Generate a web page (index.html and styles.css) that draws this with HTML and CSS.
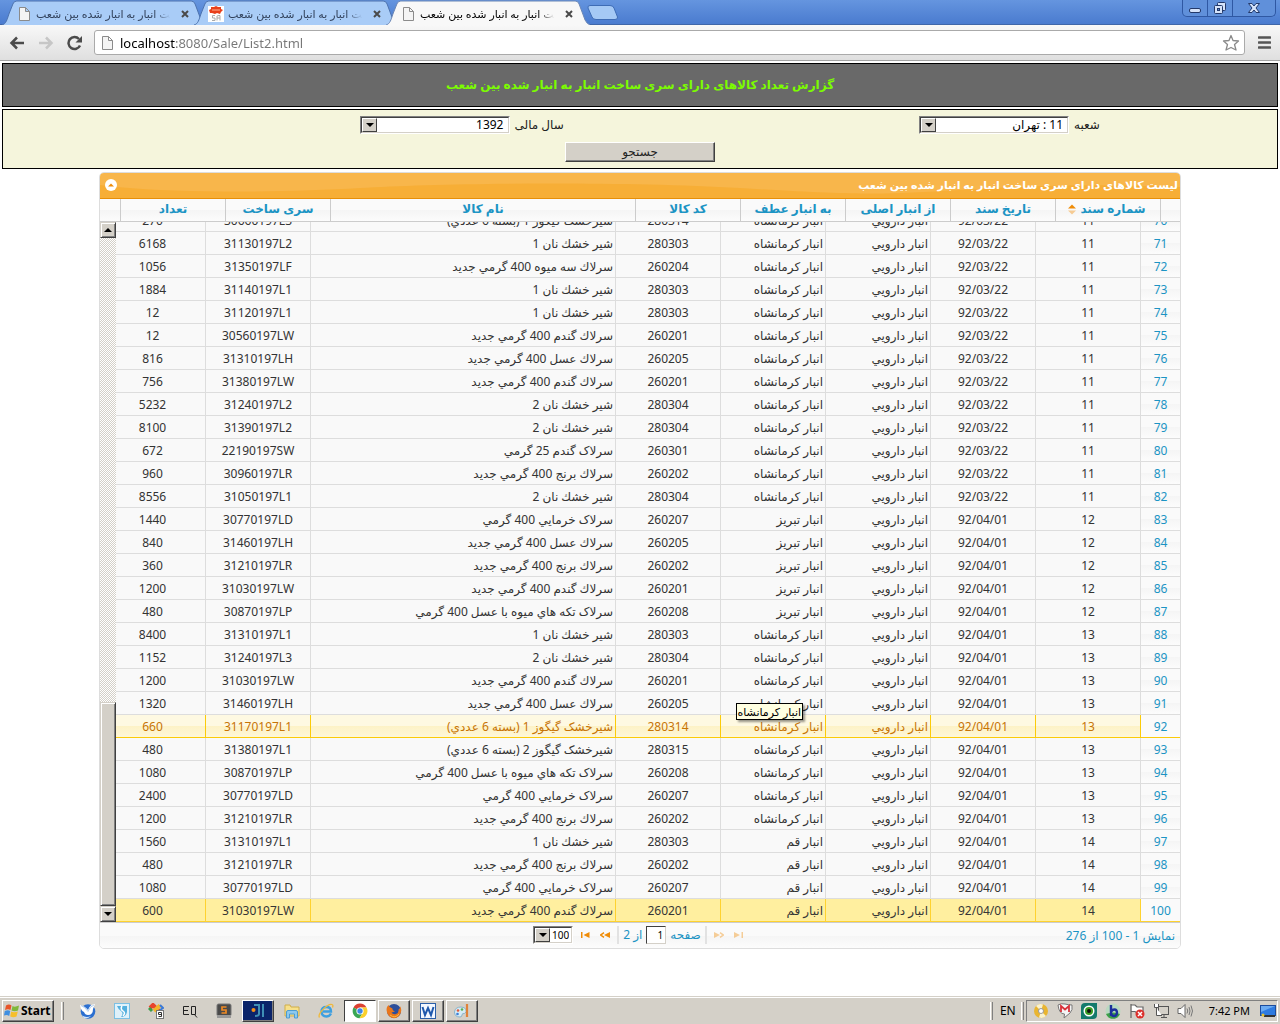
FILE: index.html
```html
<!DOCTYPE html>
<html lang="fa">
<head>
<meta charset="utf-8">
<title>گزارش تعداد کالاهای دارای سری ساخت انبار به انبار شده بین شعب</title>
<link rel="stylesheet" href="styles.css">
</head>
<body>
<header class="browser">
  <div class="tabstrip">
    <div class="tab">
      <svg class="tab-shape" viewBox="0 0 206 25" preserveAspectRatio="none"><path d="M0 25C4 24 5 20 7 14L11 4Q12 1 15 1H191Q194 1 195 4L201 20Q203 24 206 25"/></svg>
      <svg class="favicon" viewBox="0 0 16 16"><path class="page-icon" d="M3.500 1.500H9.500L13.500 5.500V14.500H3.500ZM9.500 1.500V5.500H13.500"/></svg>
      <span class="tab-title"><span dir="rtl">خت انبار به انبار شده بین شعب</span></span>
      <button class="tab-close" aria-label="Close tab"><svg viewBox="0 0 8 8"><path d="M1 1L7 7M7 1L1 7"/></svg></button>
    </div>
    <div class="tab">
      <svg class="tab-shape" viewBox="0 0 206 25" preserveAspectRatio="none"><path d="M0 25C4 24 5 20 7 14L11 4Q12 1 15 1H191Q194 1 195 4L201 20Q203 24 206 25"/></svg>
      <svg class="favicon" viewBox="0 0 16 16"><rect width="16" height="16" fill="#fff"/><path d="M1 4L3 3L3 1L6 1L8 0L10 1L13 1L13 3L15 4L13 6L12 8L9 7L7 8L4 7L2 7Z" fill="#e8401c"/><path d="M4 4H12" stroke="#ffb090"/><path d="M7 9.500H4.500V12H7V14.500H4M9 14.500V10Q9 9.500 12 9.500V14.500M9 12H12" stroke="#aaa" fill="none"/></svg>
      <span class="tab-title"><span dir="rtl">خت انبار به انبار شده بین شعب</span></span>
      <button class="tab-close" aria-label="Close tab"><svg viewBox="0 0 8 8"><path d="M1 1L7 7M7 1L1 7"/></svg></button>
    </div>
    <div class="tab tab-active">
      <svg class="tab-shape" viewBox="0 0 206 25" preserveAspectRatio="none"><path d="M0 25C4 24 5 20 7 14L11 4Q12 1 15 1H191Q194 1 195 4L201 20Q203 24 206 25"/></svg>
      <svg class="favicon" viewBox="0 0 16 16"><path class="page-icon" d="M3.500 1.500H9.500L13.500 5.500V14.500H3.500ZM9.500 1.500V5.500H13.500"/></svg>
      <span class="tab-title"><span dir="rtl">خت انبار به انبار شده بین شعب</span></span>
      <button class="tab-close" aria-label="Close tab"><svg viewBox="0 0 8 8"><path d="M1 1L7 7M7 1L1 7"/></svg></button>
    </div>
    <button class="new-tab" aria-label="New tab"><svg viewBox="0 0 32 16"><path d="M3 .5H23Q26 .5 27 3L30.500 12Q31 14.500 28 14.500H9Q6 14.500 5 12L1 3Q.5 .5 3 .5Z" fill="#a5c9f5" stroke="#3e6cb5"/></svg></button>
    <div class="window-buttons">
      <button aria-label="Minimize"><svg viewBox="0 0 12 12" width="12" height="12"><rect x=".5" y="6.500" width="11" height="4" rx="1.500"/></svg></button>
      <button aria-label="Restore"><svg viewBox="0 0 14 14" width="14" height="14"><rect x="4.500" y="1.500" width="8" height="8" rx="1"/><rect x="1.500" y="4.500" width="8" height="8" rx="1"/><rect x="4.500" y="7.500" width="2" height="2" fill="#5b8cd8"/></svg></button>
      <button class="wide" aria-label="Close"><svg viewBox="0 0 12 12" width="12" height="12"><path d="M.5 1.500H4L6 4L8 1.500H11.500L8 6L11.500 10.500H8L6 8L4 10.500H.5L4 6Z"/></svg></button>
    </div>
  </div>
  <div class="toolbar">
    <button class="nav" aria-label="Back"><svg viewBox="0 0 16 14"><path d="M15 7H3M8 1.500L2.500 7L8 12.500" stroke="#4b4b4b" stroke-width="2.500" fill="none"/></svg></button>
    <button class="nav" aria-label="Forward"><svg viewBox="0 0 16 14"><path d="M1 7H13M8 1.500L13.500 7L8 12.500" stroke="#c6c6c6" stroke-width="2.500" fill="none"/></svg></button>
    <button class="nav" aria-label="Reload"><svg viewBox="0 0 16 16"><path d="M13 10.500A6 6 0 1 1 12 4" stroke="#4b4b4b" stroke-width="2.500" fill="none"/><path d="M15 1V7.500H8.500Z" fill="#4b4b4b"/></svg></button>
    <div class="omnibox">
      <svg class="favicon" viewBox="0 0 16 16"><path class="page-icon" d="M3.500 1.500H9.500L13.500 5.500V14.500H3.500ZM9.500 1.500V5.500H13.500"/></svg>
      <input class="address" aria-label="Address" value="localhost:8080/Sale/List2.html">
      <svg class="star" viewBox="0 0 18 18"><path d="M9 1.500L11 6.500L16.500 7L12.500 10.500L14 16L9 13.500L4 16L5.500 10.500L1.500 7L7 6.500Z" fill="#fff" stroke="#8a8a8a" stroke-width="1.300" stroke-linejoin="round"/></svg>
    </div>
    <button class="menu" aria-label="Menu"><svg viewBox="0 0 13 13"><path d="M1 1.500H12M1 6.500H12M1 11.500H12" stroke="#555" stroke-width="2.600" stroke-linecap="round"/></svg></button>
  </div>
</header>

<main class="page" dir="rtl">
  <h1 class="report-title">گزارش تعداد کالاهای دارای سری ساخت انبار به انبار شده بین شعب</h1>
  <form class="filters">
    <div class="field">
      <label for="branch">شعبه</label>
      <span class="combo"><select id="branch"><option>11 : تهران</option></select><span class="combo-arrow"></span></span>
    </div>
    <div class="field">
      <label for="year">سال مالی</label>
      <span class="combo"><select id="year"><option>1392</option></select><span class="combo-arrow"></span></span>
    </div>
    <button type="button" class="search">جستجو</button>
  </form>

  <section class="grid">
    <div class="grid-caption">
      <h2>لیست کالاهای دارای سری ساخت انبار به انبار شده بین شعب</h2>
      <svg class="caption-wave" viewBox="0 0 1080 25" preserveAspectRatio="none"><path d="M0 12C60 20 180 20 260 15S520 8 640 15S780 22 860 17S1000 11 1080 14V25H0Z"/></svg>
      <button class="collapse" aria-label="بستن"><svg viewBox="0 0 12 12"><circle cx="6" cy="6" r="6" fill="#fff"/><path d="M3 7.500L6 4.500L9 7.500Z" fill="#ef8c08"/></svg></button>
    </div>
    <div class="head-clip">
      <table class="head">
        <colgroup><col class="c-rn-head"><col class="c"><col class="c"><col class="c"><col class="c"><col class="c"><col class="c-name"><col class="c"><col class="c"><col class="c-rn-head"></colgroup>
        <tr><th></th><th class="sorted">شماره سند<svg class="sort" viewBox="0 0 8 12"><path d="M0 4.500L4 .5L8 4.500Z" fill="#ef8c08"/><path d="M0 6.500L4 10.500L8 6.500Z" fill="#f6cb93"/></svg></th><th>تاریخ سند</th><th>از انبار اصلی</th><th>به انبار عطف</th><th>کد کالا</th><th>نام کالا</th><th>سری ساخت</th><th>تعداد</th><th></th></tr>
      </table>
    </div>
    <div class="grid-body">
      <div class="rows-clip">
        <table class="rows">
          <colgroup><col class="c-rn"><col class="c"><col class="c"><col class="c"><col class="c"><col class="c"><col class="c-name"><col class="c"><col class="c"></colgroup>
          <tbody id="rows"></tbody>
        </table>
      </div>
      <div class="scrollbar">
        <span class="scroll-btn"><i class="tri-up"></i></span>
        <span class="scroll-track"></span>
        <span class="scroll-thumb"></span>
        <span class="scroll-btn"><i class="tri-down"></i></span>
      </div>
      <div class="tooltip">انبار کرمانشاه</div>
    </div>
    <div class="pager">
      <div class="pager-info">نمایش 1 - 100 از 276</div>
      <div class="pager-nav">
        <button class="pg off" aria-label="اول"><svg viewBox="0 0 10 6"><path d="M0 0L6 3L0 6ZM7.500 0H9V6H7.500Z"/></svg></button>
        <button class="pg off" aria-label="قبلی"><svg viewBox="0 0 10 6"><path d="M0 0L6 3L0 6Z"/><path class="chev" d="M6 .7L9.500 3L6 5.300"/></svg></button>
        <span class="pg-sep"></span>
        <label for="pageno">صفحه</label>
        <input id="pageno" class="page-input" value="1">
        <span>از 2</span>
        <span class="pg-sep"></span>
        <button class="pg" aria-label="بعدی"><svg viewBox="0 0 10 6"><path d="M10 0L4 3L10 6Z"/><path class="chev" d="M4 .7L.5 3L4 5.300"/></svg></button>
        <button class="pg" aria-label="آخر"><svg viewBox="0 0 10 6"><path d="M9.500 0L3.500 3L9.500 6ZM1 0H2.500V6H1Z"/></svg></button>
        <span class="combo combo-small"><select aria-label="تعداد در صفحه"><option>100</option></select><span class="combo-arrow"></span></span>
      </div>
      <div></div>
    </div>
  </section>
</main>

<footer class="taskbar">
  <button class="start"><svg viewBox="0 0 16 16"><path d="M2 2.500Q5 .5 7.500 2.500L6.500 7Q4 5.500 1 7Z" fill="#e8552a"/><path d="M8.500 3Q11 4.500 15 2.500L14 7.500Q10.500 9 7.500 7.500Z" fill="#7fb83a"/><path d="M.8 8Q4 6.500 6.200 8L5.200 13Q3 11.500 0 12.500Z" fill="#3f8fe0"/><path d="M7.200 8.500Q10 10 13.800 8.500L12.500 13.500Q9.500 15 6.200 13.500Z" fill="#f6bf2c"/></svg>Start</button>
  <span class="divider"></span>
  <nav class="launch">
    <button aria-label="Thunderbird"><svg viewBox="0 0 16 16"><circle cx="8" cy="8.500" r="7.300" fill="#2b6fd0"/><path d="M0 2Q5 3 8 7Q10 1 15 1L13 6Q13 12 8 12Q5 12 4 9Q1 8 0 2Z" fill="#fff"/><path d="M1 2.500Q5 4 8 8.500Q10 3 14 2" stroke="#9cc3ee" stroke-width=".8" fill="none"/><path d="M2 12.500Q6 15 11 13Q8 16 4 15Z" fill="#cfe4fa"/></svg></button>
    <button aria-label="Maxthon"><svg viewBox="0 0 16 16"><rect x=".5" y=".5" width="15" height="15" fill="#dff1fa" stroke="#7cc0e4"/><path d="M3 3H13V9Q12 14 7 14Q10 10 7 8Q4 6 3 3Z" fill="#55b0de"/><path d="M8 3Q6 6 9 8T9 13" stroke="#fff" stroke-width="1.500" fill="none"/></svg></button>
    <button aria-label="Calendar"><svg viewBox="0 0 16 16"><path d="M2 5L5 2L13 10" stroke="#e8442c" stroke-width="4" fill="none"/><path d="M6 8L12 2.500" stroke="#f2b52c" stroke-width="4"/><path d="M1 5L4 8" stroke="#3c9c4a" stroke-width="3"/><path d="M12 2L15 5L12 7" stroke="#3a79d8" stroke-width="2" fill="none"/><rect x="8.500" y="7.500" width="7" height="8" fill="#fff" stroke="#777"/><path d="M10.500 13.500H13.500V9.500H10.500V11.500H13.500" stroke="#333" fill="none"/></svg></button>
    <button aria-label="EditPlus"><svg viewBox="0 0 16 16"><path d="M7 3.500H1.500V11.500H7M1.500 7.500H6M9.500 3.500H13.500V11.500H9.500ZM12 11L15 14.500" stroke="#222" fill="none"/></svg></button>
    <button aria-label="Sublime Text"><svg viewBox="0 0 16 16"><rect x="1" y="1" width="14" height="12" rx="1.500" fill="#4a4a4a" stroke="#777"/><rect x="1" y="12" width="14" height="3" fill="#999"/><path d="M10.500 4H6V7H10V10H5.500" stroke="#f08a24" stroke-width="1.700" fill="none"/></svg></button>
    <button class="raised dark" aria-label="IntelliJ IDEA"><svg viewBox="0 0 16 16"><circle cx="3.500" cy="7" r="2" fill="#f39019"/><path d="M4 2H9V11Q9 13 5 13M13 1V14" stroke="#3f8fb5" stroke-width="2" fill="none"/></svg></button>
    <button aria-label="Explorer"><svg viewBox="0 0 16 16"><path d="M1 2H6L7 4H15V13H1Z" fill="#f7e08a" stroke="#d0ae4a"/><path d="M2.500 15V9Q2.500 7.500 4 7.500H12Q13.500 7.500 13.500 9V15H10.500V11H5.500V15Z" fill="#8cc9ee" stroke="#4d9bd0"/></svg></button>
    <button aria-label="Internet Explorer"><svg viewBox="0 0 16 16"><path d="M13 10.500Q11.500 13.500 8.500 13.500Q3.500 13.500 3.500 8.500Q3.500 4 8.500 4Q13 4 13 8.500H5" stroke="#3c9fe0" stroke-width="2.400" fill="none"/><path d="M1.500 14.500C-1 11 10 0 14 1.500Q15.500 2 14.500 4.500" stroke="#f0b93a" stroke-width="1.300" fill="none"/></svg></button>
    <button class="pressed" aria-label="Chrome"><svg viewBox="0 0 16 16"><path d="M8 8L1.500 4.500A7.300 7.300 0 0 1 14.500 4.500H8Z" fill="#dc4132"/><path d="M8 8L1.500 4.500A7.300 7.300 0 0 0 7.500 15.300L11 9.500Z" fill="#3aa654"/><path d="M8 4.500H14.500A7.300 7.300 0 0 1 7.500 15.300L11 9.500Z" fill="#fbd02e"/><circle cx="8" cy="8" r="3.600" fill="#fff"/><circle cx="8" cy="8" r="2.700" fill="#3f86e8"/></svg></button>
    <button class="raised" aria-label="Firefox"><svg viewBox="0 0 16 16"><circle cx="8" cy="8" r="7" fill="#2d4f9b"/><path d="M1 4Q-.5 9 3 13Q8 17.500 13 13Q17 8 14 3Q14.500 6 12.500 6.500Q13 10 10 11Q7 12 5.500 9.500L9 8.500Q6 7.500 6.500 5.500Q3 4 2.500 2Z" fill="#e9761c"/><path d="M4 12Q9 16 13 11" stroke="#fbb93a" fill="none"/></svg></button>
    <button class="raised" aria-label="Word"><svg viewBox="0 0 16 16"><rect x=".5" y=".5" width="15" height="15" fill="#f3f8ff" stroke="#2b5fa8"/><path d="M2.500 4L5 12L8 5L11 12L13.500 4" stroke="#1f59ad" stroke-width="2" fill="none"/></svg></button>
    <button class="raised" aria-label="Paint"><svg viewBox="0 0 16 16"><path d="M7 4Q1 4 .5 9Q.5 14 6 14Q8 14 8 12T10.500 10.500Q13 9 12 6.500Q10.500 4 7 4Z" fill="#d6ebf5" stroke="#8bb3c8"/><circle cx="4" cy="7.500" r="1.300" fill="#e05a3c"/><circle cx="8" cy="6.500" r="1.300" fill="#58b050"/><circle cx="3.500" cy="11" r="1.300" fill="#3c80d8"/><path d="M13 1V6M13 6V14" stroke="#e0823a" stroke-width="2.200"/></svg></button>
  </nav>
  <span class="spacer"></span>
  <span class="divider"></span>
  <span class="lang">EN</span>
  <span class="divider tight"></span>
  <div class="tray">
    <svg viewBox="0 0 16 16"><circle cx="8" cy="8" r="7" fill="#e9b530"/><path d="M8 8L3 3A7 7 0 0 1 10 1.500ZM8 8L13 13A7 7 0 0 1 6 14.500Z" fill="#f9f2cf"/><circle cx="8" cy="8" r="2.500" fill="#fff" stroke="#999"/></svg>
    <svg viewBox="0 0 16 16"><path d="M1 2Q4 0 8 1T15 2Q16 7 13 10L7 15L7.500 11Q2 11 1 2Z" fill="#f4f4f4" stroke="#777"/><path d="M4 9V3L8 6.500L12 3V9" stroke="#d9303a" stroke-width="1.800" fill="none"/></svg>
    <svg viewBox="0 0 16 16"><path d="M0 4Q0 0 4 0H16V12Q16 16 12 16H0Z" fill="#147a6c"/><circle cx="8" cy="8" r="5.500" fill="#fff"/><circle cx="8" cy="8" r="4" fill="#3b9d24"/><circle cx="8" cy="8" r="2" fill="#111"/></svg>
    <svg viewBox="0 0 16 16"><circle cx="8" cy="8" r="7.500" fill="#b9d9c0"/><path d="M1 11A7.500 7.500 0 0 0 15 11Q8 8 1 11Z" fill="#3da048"/><path d="M6 2V13M6 9Q7 6.500 9.500 6.500T12 10Q11.500 13 9 13T6 10" stroke="#1b2f9c" stroke-width="2.400" fill="none"/></svg>
    <svg viewBox="0 0 16 16"><path d="M2 1V15M2.500 2H6L8 4H14V10H8L6 8.500H2.500" stroke="#666" fill="#fff" stroke-width="1.200"/><circle cx="11" cy="11" r="4.500" fill="#dc2f2b"/><path d="M9 9L13 13M13 9L9 13" stroke="#fff" stroke-width="1.500"/></svg>
    <svg viewBox="0 0 16 16"><rect x="5.500" y="3.500" width="10" height="8" fill="#d4d0c8" stroke="#555"/><path d="M8 14.500H14M11 12V14" stroke="#555"/><path d="M1.500 1V4.500H5.500V1M3.500 5V12.500H9" stroke="#555" fill="#fff"/></svg>
    <svg viewBox="0 0 16 16"><path d="M1 5.500H4L8 1.500V14.500L4 10.500H1Z" fill="#fff" stroke="#666"/><path d="M10 5.500Q11.500 8 10 10.500M12 4Q14 8 12 12M14 2.500Q17 8 14 13.500" stroke="#777" fill="none"/></svg>
    <span class="clock">7:42 PM</span>
    <svg viewBox="0 0 16 16"><rect x=".5" y="2.500" width="15" height="10" fill="#2f7be0" stroke="#1d4c9c"/><path d="M1 3H15L1 9Z" fill="#6cabf2"/><path d="M4 12H15V14H4Z" fill="#333"/><circle cx="3" cy="12" r="1.500" fill="#e8c22f"/></svg>
  </div>
</footer>
<script src="app.js"></script>
</body>
</html>
```
FILE: styles.css
```css
* { box-sizing: border-box; }

body {
  margin: 0;
  min-height: 100vh;
  display: flex;
  flex-direction: column;
  background: #fff;
  font-family: "Noto Sans", "DejaVu Sans", sans-serif;
  font-size: 12px;
  line-height: 16px;
  color: #222;
}

button, input, select { font: inherit; color: inherit; margin: 0; padding: 0; border: 0; background: none; border-radius: 0; }
svg { display: block; }

/* browser frame */
.tabstrip {
  display: flex;
  height: 25px;
  padding-left: 2px;
  background: linear-gradient(#6595df, #4a7bcf);
  border-bottom: 1px solid #3f66a8;
}
.tab {
  position: relative;
  display: flex;
  align-items: center;
  width: 204px;
  height: 25px;
  padding: 2px 13px 0 14px;
  margin-right: -12px;
  font-size: 11px;
  color: #32425c;
}
.tab-shape { position: absolute; left: 0; top: 0; width: 100%; height: 25px; fill: #a9ccf7; stroke: #4d72ad; }
.tab-active { z-index: 1; color: #000; }
.tab-active .tab-shape { fill: #f8f8f8; stroke: #6a86b5; }
.favicon { position: relative; flex: none; width: 16px; height: 16px; }
.page-icon { fill: #f4f4f4; stroke: #8b8b8b; }
.tab-title {
  position: relative;
  flex: 1;
  margin: 0 4px;
  overflow: hidden;
  white-space: nowrap;
  mask-image: linear-gradient(to right, #000 86%, transparent 98%);
}
.tab-close { position: relative; width: 16px; height: 16px; padding: 4px; }
.tab-close path { stroke: #4a4a4a; stroke-width: 2; }
.new-tab { width: 32px; height: 16px; margin: 5px 0 0 9px; }
.window-buttons {
  display: flex;
  height: 17px;
  margin: 0 4px 0 auto;
  border: 1px solid #2f58a3;
  border-top: 0;
  border-radius: 0 0 5px 5px;
  background: #6090da;
}
.window-buttons button { width: 25px; display: flex; justify-content: center; align-items: center; border-right: 1px solid #2f58a3; }
.window-buttons .wide { width: 42px; border-right: 0; }
.window-buttons svg { fill: #d5e3fa; stroke: #23396a; }

.toolbar {
  display: flex;
  align-items: center;
  height: 36px;
  padding: 0 9px 0 8px;
  background: linear-gradient(#f8f8f8, #dfdfdf);
  border-bottom: 1px solid #a3a3a3;
}
.nav { width: 29px; height: 24px; padding-left: 1px; }
.nav svg { width: 16px; height: 16px; }
.omnibox {
  flex: 1;
  display: flex;
  align-items: center;
  height: 25px;
  padding: 0 4px;
  margin-left: -1px;
  background: #fff;
  border: 1px solid #aaa;
  border-radius: 3px;
}
.address {
  flex: 1;
  height: 22px;
  margin-left: 5px;
  font-size: 13px;
  background-image: linear-gradient(to right, #000 55px, #777 55px);
  background-clip: text;
  -webkit-background-clip: text;
  color: transparent;
}
.star { width: 18px; height: 18px; }
.menu { margin-left: 13px; }
.menu svg { width: 13px; height: 13px; }

/* report page */
.page { flex: 1; padding: 2px; }
.report-title {
  margin: 0;
  height: 44px;
  display: flex;
  align-items: center;
  justify-content: center;
  background: #696969;
  border: 1px solid #000;
  color: #7cfc00;
  font-size: 12px;
}
.filters {
  display: grid;
  grid-template-columns: 42fr 44fr 14fr;
  row-gap: 8px;
  margin-top: 2px;
  padding: 6px 0;
  background: #f5f5dc;
  border: 1px solid #000;
}
.field { display: flex; justify-content: center; align-items: center; gap: 5px; }
.search {
  grid-column: 1 / -1;
  justify-self: center;
  width: 150px;
  height: 20px;
  background: #d4d0c8;
  border: 1px solid;
  border-color: #fff #404040 #404040 #fff;
  box-shadow: inset -1px -1px #808080;
}

.combo { position: relative; display: inline-block; height: 18px; width: 150px; border: 1px solid; border-color: #808080 #fff #fff #808080; }
.combo select {
  display: block;
  appearance: none;
  width: 100%;
  height: 16px;
  padding: 0 4px 0 18px;
  line-height: 14px;
  background: #fff;
  color: #000;
  border: 1px solid;
  border-color: #404040 #d4d0c8 #d4d0c8 #404040;
}
.combo-arrow {
  position: absolute;
  left: 1px;
  top: 1px;
  width: 15px;
  height: 14px;
  pointer-events: none;
  background: #d4d0c8;
  border: 1px solid;
  border-color: #fff #404040 #404040 #fff;
}
.combo-arrow::after {
  content: "";
  position: absolute;
  left: 3px;
  top: 4px;
  border: 4px solid transparent;
  border-top-color: #000;
  border-bottom: 0;
}

/* data grid */
.grid {
  width: 100%;
  max-width: 1082px;
  margin: 3px auto 0;
  border: 1px solid #ddd;
  border-radius: 5px;
  overflow: hidden;
}
.grid-caption {
  position: relative;
  display: flex;
  align-items: center;
  justify-content: space-between;
  height: 26px;
  padding: 0 2px 2px 5px;
  background: #f8b64b;
  border-bottom: 1px solid #e78f08;
}
.caption-wave { position: absolute; left: 0; top: 0; width: 100%; height: 100%; fill: #f7ae36; }
.grid-caption h2 { position: relative; z-index: 1; margin: 0; font-size: 11px; color: #fff; }
.collapse { position: relative; width: 12px; height: 12px; }

.head-clip { overflow: hidden; border-bottom: 1px solid #ccc; }
table { border-collapse: separate; border-spacing: 0; table-layout: fixed; width: 1080px; }
.c { width: 105px; }
.c-name { width: 305px; }
.c-rn { width: 40px; }
.c-rn-head { width: 20px; }
.head { background: linear-gradient(#fafafa 50%, #f5f5f5 50%, #fcfcfc); }
.head th { height: 22px; padding: 0 0 2px; color: #1c94c4; font-size: 12px; line-height: 18px; border-left: 1px solid #ccc; white-space: nowrap; }
.head th:last-child { border-left: 0; }
.head .sorted { padding-right: 10px; }
.sort { display: inline-block; width: 8px; height: 12px; margin: 0 4px 0 8px; vertical-align: middle; }
.head .sorted { text-align: center; }

.grid-body { position: relative; display: flex; height: 700px; }
.rows-clip { flex: 1; min-width: 0; overflow: hidden; display: flex; flex-direction: column; justify-content: flex-end; }
.rows { flex: none; background: #f9f9f9; }
.rows td {
  height: 23px;
  padding: 2px 2px 0;
  border-bottom: 1px solid #ddd;
  border-left: 1px solid #ddd;
  text-align: center;
  white-space: nowrap;
  overflow: hidden;
  color: #333;
}
.rows td:last-child { border-left: 0; }
.rows .text { text-align: right; }
.rows td:first-child { color: #1c94c4; background: linear-gradient(#fafafa 50%, #f5f5f5 50%, #fcfcfc); }
.rows .hover td { color: #c77405; border-color: #fbcb09; background: linear-gradient(#fef9e2 50%, #fdf2c6 50%, #fef7d8); }
.rows .selected td { color: #363636; border-color: #fed22f; background: #ffef9f; }
.rows .hover td:first-child, .rows .selected td:first-child { color: #1c94c4; background: #fafafa; }

.scrollbar {
  flex: none;
  width: 16px;
  display: flex;
  flex-direction: column;
  background: repeating-conic-gradient(#d4d0c8 0 25%, #fff 0 50%) 0 0 / 2px 2px;
}
.scroll-btn, .scroll-thumb {
  background: #d4d0c8;
  border: 1px solid;
  border-color: #d4d0c8 #404040 #404040 #d4d0c8;
  box-shadow: inset 1px 1px #fff, inset -1px -1px #808080;
}
.scroll-btn { display: flex; align-items: center; justify-content: center; height: 16px; }
.scroll-track { flex: 465; }
.scroll-thumb { flex: 203; }
.tri-up, .tri-down { border: 4px solid transparent; }
.tri-up { border-top: 0; border-bottom-color: #000; }
.tri-down { border-bottom: 0; border-top-color: #000; }

.tooltip {
  position: absolute;
  right: 377px;
  bottom: 202px;
  height: 17px;
  padding: 0 1px;
  font-size: 11px;
  line-height: 15px;
  color: #000;
  background: #ffffe1;
  border: 1px solid #000;
  box-shadow: 2px 2px 2px rgba(0, 0, 0, .4);
}

.pager {
  display: grid;
  grid-template-columns: 1fr auto 1fr;
  align-items: center;
  height: 26px;
  padding: 0 5px;
  border-top: 1px solid #ccc;
  background: linear-gradient(#fafafa 50%, #f5f5f5 50%, #fcfcfc);
  color: #1c94c4;
}
.pager-nav { display: flex; align-items: center; gap: 4px; padding-bottom: 2px; }
.pg { width: 16px; height: 16px; display: flex; align-items: center; justify-content: center; }
.pg svg { width: 10px; height: 6px; fill: #ef8c08; }
.pg .chev { fill: none; stroke: #ef8c08; stroke-width: 1.5; }
.pg.off { opacity: .4; }
.pg-sep { width: 2px; height: 18px; background: #e2e2e2; }
.page-input { width: 20px; height: 18px; padding: 0 2px; font-size: 10px; color: #000; background: #fff; border: 1px solid; border-color: #404040 #d4d0c8 #d4d0c8 #404040; }
.combo-small { width: 40px; }
.combo-small select { font-size: 10px; padding: 0 2px 0 16px; }

/* taskbar */
.taskbar {
  display: flex;
  align-items: center;
  height: 28px;
  padding: 2px;
  background: #d4d0c8;
  border-top: 1px solid #d4d0c8;
  box-shadow: inset 0 1px #fff;
  color: #000;
}
.start {
  display: flex;
  align-items: center;
  gap: 1px;
  width: 52px;
  height: 22px;
  padding: 0 1px;
  font-weight: bold;
  border: 1px solid;
  border-color: #fff #404040 #404040 #fff;
  box-shadow: inset -1px -1px #808080;
}
.start svg { width: 16px; height: 16px; flex: none; }
.divider { width: 3px; height: 18px; margin: 0 7px; background: #d4d0c8; border: solid; border-width: 0 1px; border-color: #fff #808080 #fff #fff; }
.divider.tight { margin: 0 2px 0 5px; }
.launch { display: flex; gap: 2px; margin-left: 1px; }
.launch button { width: 32px; height: 22px; display: flex; align-items: center; justify-content: center; }
.launch svg, .tray svg { width: 16px; height: 16px; flex: none; }
.launch .raised { border: 1px solid; border-color: #fff #404040 #404040 #fff; box-shadow: inset -1px -1px #808080; }
.launch .dark { background: #0a246a; }
.launch .pressed { background: #fff; border: 1px solid; border-color: #404040 #fff #fff #404040; }
.spacer { flex: 1; }
.tray { display: flex; align-items: center; gap: 8px; height: 22px; padding: 0 1px 0 6px; border: 1px solid; border-color: #808080 #fff #fff #808080; }
.clock { margin: 0 2px 0 8px; font-size: 11px; }
```
FILE: app.js
```js
const KERMANSHAH = "انبار كرمانشاه", TABRIZ = "انبار تبريز", QOM = "انبار قم", MAIN = "انبار دارويي";
const N = {
  gig1: "شیرخشک گیگوز 1 (بسته 6 عددي)",
  gig2: "شیرخشک گیگوز 2 (بسته 6 عددي)",
  nan1: "شير خشك نان 1",
  nan2: "شير خشك نان 2",
  fruit: "سرلاك سه ميوه 400 گرمي جديد",
  wheat: "سرلاك گندم 400 گرمي جديد",
  wheat25: "سرلاک گندم 25 گرمي",
  honey: "سرلاك عسل 400 گرمي جديد",
  rice: "سرلاك برنج 400 گرمي جديد",
  date: "سرلاک خرمايي 400 گرمي",
  pieces: "سرلاک تكه هاي ميوه با عسل 400 گرمي"
};
const d1 = "92/03/22", d2 = "92/04/01";
const data = [
  [11, d1, KERMANSHAH, 280314, N.gig1, "30660197L3", 270],
  [11, d1, KERMANSHAH, 280303, N.nan1, "31130197L2", 6168],
  [11, d1, KERMANSHAH, 260204, N.fruit, "31350197LF", 1056],
  [11, d1, KERMANSHAH, 280303, N.nan1, "31140197L1", 1884],
  [11, d1, KERMANSHAH, 280303, N.nan1, "31120197L1", 12],
  [11, d1, KERMANSHAH, 260201, N.wheat, "30560197LW", 12],
  [11, d1, KERMANSHAH, 260205, N.honey, "31310197LH", 816],
  [11, d1, KERMANSHAH, 260201, N.wheat, "31380197LW", 756],
  [11, d1, KERMANSHAH, 280304, N.nan2, "31240197L2", 5232],
  [11, d1, KERMANSHAH, 280304, N.nan2, "31390197L2", 8100],
  [11, d1, KERMANSHAH, 260301, N.wheat25, "22190197SW", 672],
  [11, d1, KERMANSHAH, 260202, N.rice, "30960197LR", 960],
  [11, d1, KERMANSHAH, 280304, N.nan2, "31050197L1", 8556],
  [12, d2, TABRIZ, 260207, N.date, "30770197LD", 1440],
  [12, d2, TABRIZ, 260205, N.honey, "31460197LH", 840],
  [12, d2, TABRIZ, 260202, N.rice, "31210197LR", 360],
  [12, d2, TABRIZ, 260201, N.wheat, "31030197LW", 1200],
  [12, d2, TABRIZ, 260208, N.pieces, "30870197LP", 480],
  [13, d2, KERMANSHAH, 280303, N.nan1, "31310197L1", 8400],
  [13, d2, KERMANSHAH, 280304, N.nan2, "31240197L3", 1152],
  [13, d2, KERMANSHAH, 260201, N.wheat, "31030197LW", 1200],
  [13, d2, KERMANSHAH, 260205, N.honey, "31460197LH", 1320],
  [13, d2, KERMANSHAH, 280314, N.gig1, "31170197L1", 660],
  [13, d2, KERMANSHAH, 280315, N.gig2, "31380197L1", 480],
  [13, d2, KERMANSHAH, 260208, N.pieces, "30870197LP", 1080],
  [13, d2, KERMANSHAH, 260207, N.date, "30770197LD", 2400],
  [13, d2, KERMANSHAH, 260202, N.rice, "31210197LR", 1200],
  [14, d2, QOM, 280303, N.nan1, "31310197L1", 1560],
  [14, d2, QOM, 260202, N.rice, "31210197LR", 480],
  [14, d2, QOM, 260207, N.date, "30770197LD", 1080],
  [14, d2, QOM, 260201, N.wheat, "31030197LW", 600]
];
const FIRST_ROW = 70;
const body = document.getElementById("rows");
data.forEach(([doc, date, to, code, name, serial, count], i) => {
  const no = FIRST_ROW + i;
  const tr = body.insertRow();
  if (no === 92) tr.className = "hover";
  if (no === 100) tr.className = "selected";
  [no, doc, date, MAIN, to, code, name, serial, count].forEach((value, c) => {
    const td = tr.insertCell();
    td.textContent = value;
    if (c === 3 || c === 4 || c === 6) td.className = "text";
    if (c === 2 || c === 7) td.dir = "ltr";
  });
});
```
